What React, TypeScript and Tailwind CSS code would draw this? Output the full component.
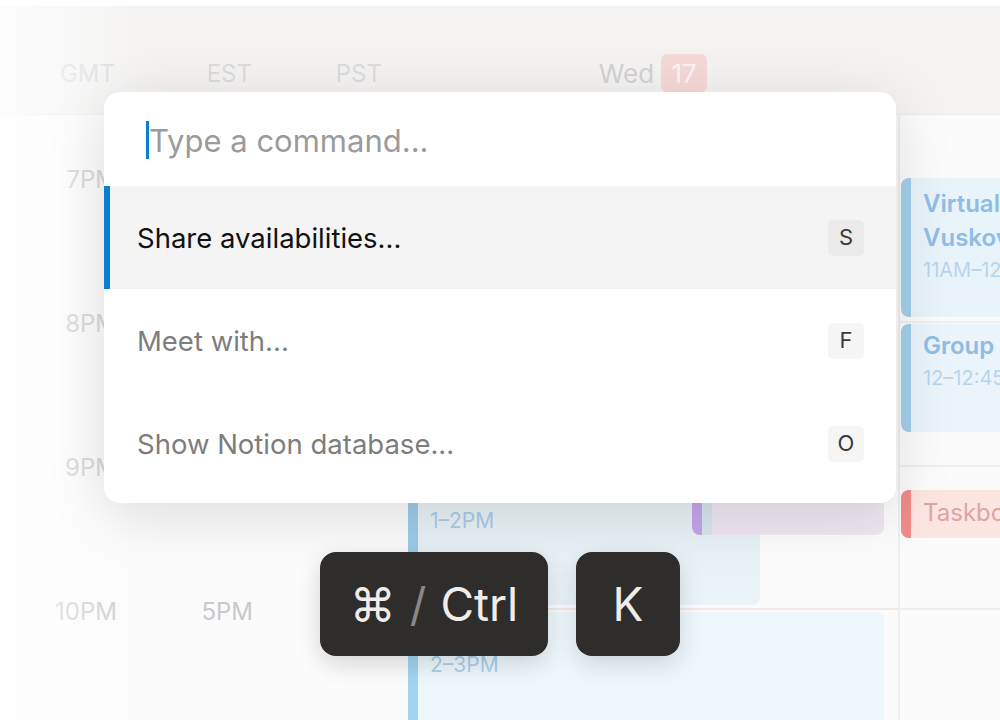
import { ReactNode } from 'react';

const hours = [
  { gmt: '7PM', est: '', pst: '' },
  { gmt: '8PM', est: '', pst: '' },
  { gmt: '9PM', est: '', pst: '' },
  { gmt: '10PM', est: '5PM', pst: '' },
];

function Kbd({ children, active }: { children: ReactNode; active?: boolean }) {
  return (
    <span
      className={`flex h-[36px] w-[36px] items-center justify-center rounded-[5px] text-[22px] text-[#3a3a3a] ${
        active ? 'bg-[#ebebeb]' : 'bg-[#f5f5f5]'
      }`}
    >
      {children}
    </span>
  );
}

function CommandRow({ label, shortcut, active }: { label: string; shortcut: string; active?: boolean }) {
  return (
    <div
      className={`flex h-[103px] items-center justify-between border-l-[6px] pl-[27px] pr-[32px] ${
        active ? 'border-[#0a7fd0] bg-[#f4f4f4] text-[#111]' : 'border-transparent text-[#7d7d7d]'
      }`}
    >
      <span className="pt-[2px] text-[27.5px]">{label}</span>
      <Kbd active={active}>{shortcut}</Kbd>
    </div>
  );
}

export default function App() {
  return (
    <div
      className="relative h-[720px] w-[1000px] overflow-hidden bg-white"
      style={{ fontFamily: 'Inter, "Noto Sans", sans-serif' }}
    >
      {/* calendar behind */}
      <div className="mt-[6px] flex h-[109px] items-center border-b border-[#ececec] bg-[#f4f3f2] pt-[28px]">
        <div className="w-[136px] pr-[21px] text-right text-[24px] text-[#dcdcdc]">GMT</div>
        <div className="w-[136px] pr-[20px] text-right text-[24px] text-[#dcdcdc]">EST</div>
        <div className="w-[136px] pr-[26px] text-right text-[24px] text-[#dcdcdc]">PST</div>
        <div className="flex w-[490px] items-center justify-center gap-[7px] pb-[2px]">
          <span className="text-[26px] text-[#d2d2d2]">Wed</span>
          <span className="flex h-[38px] w-[46px] items-center justify-center rounded-[6px] bg-[#f5d9d8] text-[26px] text-[#fdf4f4]">
            17
          </span>
        </div>
        <div className="h-full flex-1" />
      </div>

      <div className="flex h-[605px] bg-[#fbfbfb]">
        {(['gmt', 'est', 'pst'] as const).map((tz) => (
          <div key={tz} className="w-[136px] pr-[19px] pt-[50px] text-right">
            {hours.map((h, i) => (
              <div key={i} className="h-[144px] text-[24px] leading-[30px] text-[#c9c9c9]">
                {h[tz]}
              </div>
            ))}
          </div>
        ))}

        {/* Wed column */}
        <div className="relative w-[490px]">
          <div className="absolute left-0 right-0 top-[493px] h-[2px] bg-[#f3e8e8]" />
          <div className="absolute left-0 top-[350px] flex h-[140px] w-[352px] overflow-hidden rounded-[8px] bg-gradient-to-b from-[#e6eef2] to-[#eaf4f8]">
            <div className="w-[10px] bg-[#9ccbe8]" />
            <div className="pl-[12px] pt-[40px] text-[21px] text-[#a8cbe8]">1–2PM</div>
          </div>
          <div className="absolute left-[284px] top-[375px] flex h-[45px] w-[192px] overflow-hidden rounded-b-[8px] bg-[#efe6f1]">
            <div className="w-[10px] bg-[#c5a4ea]" />
            <div className="w-[10px] bg-[#d6e4ec]" />
          </div>
          <div className="absolute left-0 top-[497px] flex h-[130px] w-[476px] overflow-hidden rounded-[8px] bg-[#eef8fc]">
            <div className="w-[10px] bg-[#a2d4f1]" />
            <div className="pl-[12px] pt-[37px] text-[21px] text-[#a9cfee]">2–3PM</div>
          </div>
        </div>

        {/* Thu column */}
        <div className="relative flex-1 border-l-2 border-[#efefef]">
          <div className="absolute left-0 right-0 top-[206px] h-[2px] bg-[#efefef]" />
          <div className="absolute left-0 right-0 top-[350px] h-[2px] bg-[#efefef]" />
          <div className="absolute left-0 right-0 top-[493px] h-[2px] bg-[#f3ecec]" />
          <div className="absolute left-[1px] top-[63px] flex h-[139px] w-[120px] overflow-hidden rounded-l-[8px] bg-[#e9f3fa]">
            <div className="w-[10px] shrink-0 bg-[#a3cfea]" />
            <div className="whitespace-nowrap pl-[12px] pt-[9px]">
              <div className="text-[24px] font-semibold leading-[34px] text-[#8ebde6]">Virtual</div>
              <div className="text-[24px] font-semibold leading-[34px] text-[#8ebde6]">Vuskov</div>
              <div className="text-[20px] leading-[30px] text-[#b5d6ef]">11AM–12PM</div>
            </div>
          </div>
          <div className="absolute left-[1px] top-[209px] flex h-[108px] w-[120px] overflow-hidden rounded-l-[8px] bg-[#ebf4fa]">
            <div className="w-[10px] shrink-0 bg-[#a3cfea]" />
            <div className="whitespace-nowrap pl-[12px] pt-[7px]">
              <div className="text-[24px] font-semibold leading-[30px] text-[#8ebde6]">Group</div>
              <div className="text-[20px] leading-[34px] text-[#b5d6ef]">12–12:45</div>
            </div>
          </div>
          <div className="absolute left-[1px] top-[375px] flex h-[48px] w-[120px] overflow-hidden rounded-l-[8px] bg-[#fde6e1]">
            <div className="w-[10px] shrink-0 bg-[#f08b8b]" />
            <div className="whitespace-nowrap pl-[12px] pt-[8px] text-[24px] leading-[30px] text-[#dca7a2]">Taskboard</div>
          </div>
        </div>
      </div>

      {/* haze on the left */}
      <div className="pointer-events-none absolute left-0 top-0 h-full w-[150px] bg-gradient-to-r from-white/80 to-transparent" />

      {/* command palette */}
      <div className="absolute left-[104px] top-[92px] w-[792px] overflow-hidden rounded-[16px] bg-white pb-[8px] shadow-[0_12px_60px_rgba(0,0,0,0.12)]">
        <div className="flex h-[94px] items-center pl-[42px] pt-[2px]">
          <span className="h-[38px] w-[3px] bg-[#0a7fd0]" />
          <span className="pt-[2px] text-[31px] text-[#9b9b9b]">Type a command...</span>
        </div>
        <CommandRow label="Share availabilities..." shortcut="S" active />
        <CommandRow label="Meet with..." shortcut="F" />
        <CommandRow label="Show Notion database..." shortcut="O" />
      </div>

      {/* keyboard hint */}
      <div className="absolute left-[320px] top-[552px] flex gap-[28px]">
        <div className="flex h-[104px] w-[228px] items-center justify-center gap-[14px] rounded-[16px] bg-[#2f2d2c] text-[46px] text-[#efecea] shadow-[0_8px_24px_rgba(0,0,0,0.15)]">
          <span>⌘</span>
          <span className="text-[#8a8886]">/</span>
          <span>Ctrl</span>
        </div>
        <div className="flex h-[104px] w-[104px] items-center justify-center rounded-[16px] bg-[#2f2d2c] text-[46px] text-[#efecea] shadow-[0_8px_24px_rgba(0,0,0,0.15)]">
          K
        </div>
      </div>
    </div>
  );
}
